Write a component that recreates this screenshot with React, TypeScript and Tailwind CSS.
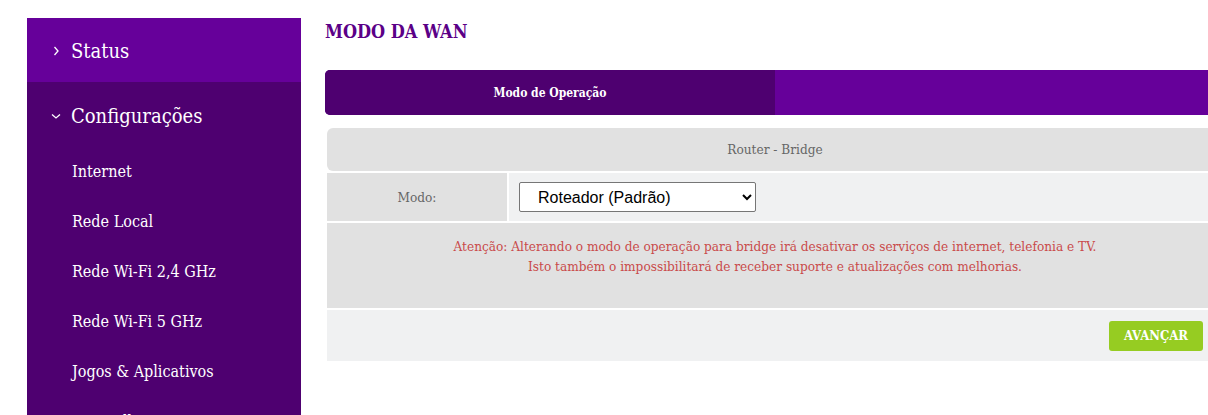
import React from 'react';

const slab = { fontFamily: '"DejaVu Serif", serif', fontStretch: 'condensed' as const };

const subItems = [
    'Internet',
    'Rede Local',
    'Rede Wi-Fi 2,4 GHz',
    'Rede Wi-Fi 5 GHz',
    'Jogos & Aplicativos',
    'Firewall',
];

const Chevron: React.FC<{ down?: boolean }> = ({ down }) => (
    <svg
        width="12"
        height="12"
        viewBox="0 0 12 12"
        className="mr-[9px] shrink-0"
        fill="none"
        stroke="currentColor"
        strokeWidth="1.3"
    >
        {down ? <path d="M2 4.5 L6 8 L10 4.5" /> : <path d="M4.5 2 L8 6 L4.5 10" />}
    </svg>
);

const Sidebar: React.FC = () => (
    <aside className="mt-[18px] ml-[27px] w-[274px] shrink-0 text-white" style={slab}>
        <div className="h-[64px] bg-[#66009a] flex items-center pl-[23px] pt-[2px] text-[20px]">
            <Chevron />
            <span>Status</span>
        </div>
        <div className="bg-[#4e0070] h-[400px]">
            <div className="h-[64px] flex items-center pl-[23px] pt-[3px] text-[20px]">
                <Chevron down />
                <span>Configurações</span>
            </div>
            {subItems.map((item) => (
                <div key={item} className="h-[50px] flex items-center pl-[45px] pt-[1px] text-[16px]">
                    {item}
                </div>
            ))}
        </div>
    </aside>
);

export default function App() {
    return (
        <div className="w-[1208px] h-[415px] overflow-hidden bg-white flex">
            <Sidebar />

            <main className="ml-[24px] w-[900px] shrink-0" style={slab}>
                {/* Title */}
                <h1 className="h-[70px] pt-[17px] text-[18px] font-bold text-[#5b0087] leading-[30px]">
                    MODO DA WAN
                </h1>

                {/* Tabs */}
                <div className="h-[45px] flex bg-[#66009a] rounded-l-[5px] overflow-hidden">
                    <div className="w-[450px] bg-[#4e0070] flex items-center justify-center text-white text-[12px] font-bold">
                        Modo de Operação
                    </div>
                </div>

                {/* Table */}
                <div className="mx-[2px] mt-[13px] flex flex-col gap-[2px] text-[13.5px] text-[#666666]">
                    <div className="h-[43px] bg-[#e1e1e1] rounded-l-[6px] flex items-center justify-center">
                        Router - Bridge
                    </div>
                    <div className="h-[48px] flex gap-[2px]">
                        <div className="w-[180px] bg-[#e1e1e1] flex items-center justify-center">
                            Modo:
                        </div>
                        <div className="flex-1 bg-[#f0f1f2] flex items-center pl-[10px]">
                            <select
                                className="w-[237px] h-[30px] border border-[#767676] rounded-[2px] bg-white pl-[14px] text-[16px] text-black"
                                style={{ fontFamily: '"Liberation Sans", Arial, sans-serif' }}
                                defaultValue="router"
                            >
                                <option value="router">Roteador (Padrão)</option>
                                <option value="bridge">Bridge</option>
                            </select>
                        </div>
                    </div>
                    <div className="h-[85px] bg-[#e1e1e1] pt-[13px] text-center text-[#c94a4a] leading-[20px]">
                        <div>Atenção: Alterando o modo de operação para bridge irá desativar os serviços de internet, telefonia e TV.</div>
                        <div>Isto também o impossibilitará de receber suporte e atualizações com melhorias.</div>
                    </div>
                    <div className="h-[51px] bg-[#f0f1f2] flex items-center pl-[782px]">
                        <button className="w-[94px] h-[30px] rounded-[3px] bg-[#96cc22] text-white text-[13px] font-semibold">
                            AVANÇAR
                        </button>
                    </div>
                </div>
            </main>
        </div>
    );
}
